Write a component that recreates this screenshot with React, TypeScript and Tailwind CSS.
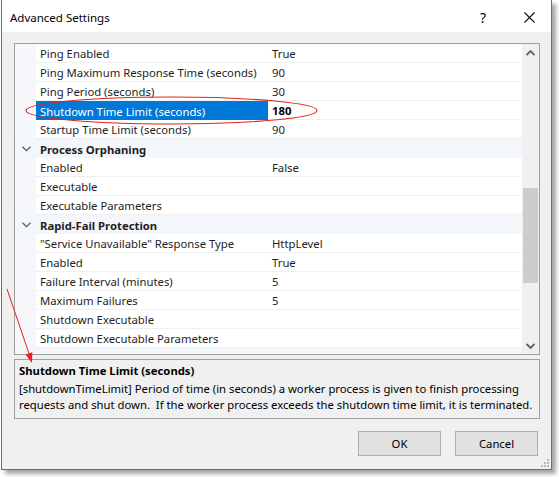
import React from "react";

type Row =
  | { kind: "prop"; name: string; value?: string; selected?: boolean }
  | { kind: "cat"; name: string };

const rows: Row[] = [
  { kind: "prop", name: "Ping Enabled", value: "True" },
  { kind: "prop", name: "Ping Maximum Response Time (seconds)", value: "90" },
  { kind: "prop", name: "Ping Period (seconds)", value: "30" },
  { kind: "prop", name: "Shutdown Time Limit (seconds)", value: "180", selected: true },
  { kind: "prop", name: "Startup Time Limit (seconds)", value: "90" },
  { kind: "cat", name: "Process Orphaning" },
  { kind: "prop", name: "Enabled", value: "False" },
  { kind: "prop", name: "Executable" },
  { kind: "prop", name: "Executable Parameters" },
  { kind: "cat", name: "Rapid-Fail Protection" },
  { kind: "prop", name: "\"Service Unavailable\" Response Type", value: "HttpLevel" },
  { kind: "prop", name: "Enabled", value: "True" },
  { kind: "prop", name: "Failure Interval (minutes)", value: "5" },
  { kind: "prop", name: "Maximum Failures", value: "5" },
  { kind: "prop", name: "Shutdown Executable" },
  { kind: "prop", name: "Shutdown Executable Parameters" },
  { kind: "cat", name: "Recycling" },
];

const Chevron = () => (
  <svg width="9" height="6" viewBox="0 0 9 6">
    <path d="M0.5 0.8 L4.5 4.6 L8.5 0.8" fill="none" stroke="#5a5a5a" strokeWidth="1.3" />
  </svg>
);

const GridRow = ({ row }: { row: Row }) => {
  if (row.kind === "cat") {
    return (
      <div className="flex h-[19px] shrink-0 items-center bg-[#f3f6fb]">
        <div className="flex w-[21px] justify-center pl-[1px]">
          <Chevron />
        </div>
        <div className="pl-[4px] pt-[2px] font-bold text-[#1e1e1e]">{row.name}</div>
      </div>
    );
  }
  return (
    <div className="flex h-[19px] shrink-0">
      <div className="w-[21px] bg-[#f5f7fb]" />
      <div
        className={
          row.selected
            ? "flex w-[232px] items-center bg-[#0078d7] pl-[4px] pt-[2px] text-white"
            : "flex w-[232px] items-center border-b border-[#f0f0f0] pl-[4px] pt-[2px] text-[#1e1e1e]"
        }
      >
        <span className="whitespace-nowrap">{row.name}</span>
      </div>
      <div
        className={
          row.selected
            ? "flex flex-1 items-center border-b border-[#f0f0f0] pl-[4px] pt-[2px] font-bold text-black"
            : "flex flex-1 items-center border-b border-[#f0f0f0] pl-[4px] pt-[2px] text-[#1e1e1e]"
        }
      >
        {row.value}
      </div>
    </div>
  );
};

export default function App() {
  return (
    <div
      className="relative h-[477px] w-[559px] overflow-hidden bg-white text-[11.3px] leading-[16px]"
      style={{ fontFamily: '"Noto Sans", "Open Sans", sans-serif' }}
    >
      <div className="relative ml-[1px] flex h-[470px] w-[551px] flex-col border-x border-b border-[#2b7bd0] bg-[#f0f0f0] shadow-[4px_4px_4px_rgba(0,0,0,0.35)]">
        {/* title bar */}
        <div className="flex h-[32px] shrink-0 items-center bg-white pl-[8px] pr-[16px] pt-[3px]">
          <span className="flex-1 text-[11.5px] text-black">Advanced Settings</span>
          <span className="mr-[38px] text-[14px] text-black">?</span>
          <svg width="11" height="11" viewBox="0 0 11 11">
            <path d="M0.5 0.5 L10.5 10.5 M10.5 0.5 L0.5 10.5" stroke="#111" strokeWidth="1.1" />
          </svg>
        </div>

        <div className="flex flex-1 flex-col pl-[12px] pt-[11px]">
          {/* property grid */}
          <div className="flex h-[312px] w-[526px] border border-[#a0a0a0] bg-white">
            <div className="flex flex-1 flex-col overflow-hidden">
              {rows.map((r, i) => (
                <GridRow key={i} row={r} />
              ))}
            </div>
            <div className="flex w-[17px] flex-col bg-[#f0f0f0]">
              <div className="flex h-[17px] items-center justify-center">
                <svg width="9" height="6" viewBox="0 0 9 6">
                  <path d="M0.5 5 L4.5 1 L8.5 5" fill="none" stroke="#606060" strokeWidth="1.8" />
                </svg>
              </div>
              <div className="flex-1 pl-[1px]">
                <div className="mt-[127px] h-[95px] w-[15px] bg-[#cdcdcd]" />
              </div>
              <div className="flex h-[17px] items-center justify-center">
                <svg width="9" height="6" viewBox="0 0 9 6">
                  <path d="M0.5 1 L4.5 5 L8.5 1" fill="none" stroke="#606060" strokeWidth="1.8" />
                </svg>
              </div>
            </div>
          </div>

          {/* description */}
          <div className="mt-[4px] h-[60px] w-[526px] border border-[#a0a0a0] bg-[#f0f0f0] pl-[4px] pt-[3px] text-black">
            <div className="whitespace-nowrap font-bold">Shutdown Time Limit (seconds)</div>
            <div className="mt-[2px] whitespace-nowrap">
              <div>[shutdownTimeLimit] Period of time (in seconds) a worker process is given to finish processing</div>
              <div>requests and shut down.&nbsp; If the worker process exceeds the shutdown time limit, it is terminated.</div>
            </div>
          </div>

          {/* buttons */}
          <div className="mt-[12px] flex w-[524px] justify-end gap-[14px]">
            <button className="h-[25px] w-[83px] border border-[#adadad] bg-[#e1e1e1] pt-[1px] text-black">OK</button>
            <button className="h-[25px] w-[83px] border border-[#adadad] bg-[#e1e1e1] pt-[1px] text-black">Cancel</button>
          </div>
        </div>

        {/* resize grip */}
        <svg className="absolute bottom-[2px] right-[2px]" width="8" height="8" viewBox="0 0 8 8">
          <rect x="6" y="0" width="2" height="2" fill="#b8b8b8" />
          <rect x="3" y="3" width="2" height="2" fill="#b8b8b8" />
          <rect x="6" y="3" width="2" height="2" fill="#b8b8b8" />
          <rect x="0" y="6" width="2" height="2" fill="#b8b8b8" />
          <rect x="3" y="6" width="2" height="2" fill="#b8b8b8" />
          <rect x="6" y="6" width="2" height="2" fill="#b8b8b8" />
        </svg>
      </div>

      {/* annotations */}
      <svg className="pointer-events-none absolute left-0 top-0" width="559" height="477" viewBox="0 0 559 477">
        <ellipse cx="171.5" cy="110.5" rx="145.5" ry="13.5" fill="none" stroke="#e0231c" strokeWidth="1.1" />
        <line x1="7" y1="289" x2="29.5" y2="355" stroke="#e0231c" strokeWidth="1" />
        <polygon points="25.5,354.6 32.3,352.3 32,363" fill="#e0231c" />
      </svg>
    </div>
  );
}
